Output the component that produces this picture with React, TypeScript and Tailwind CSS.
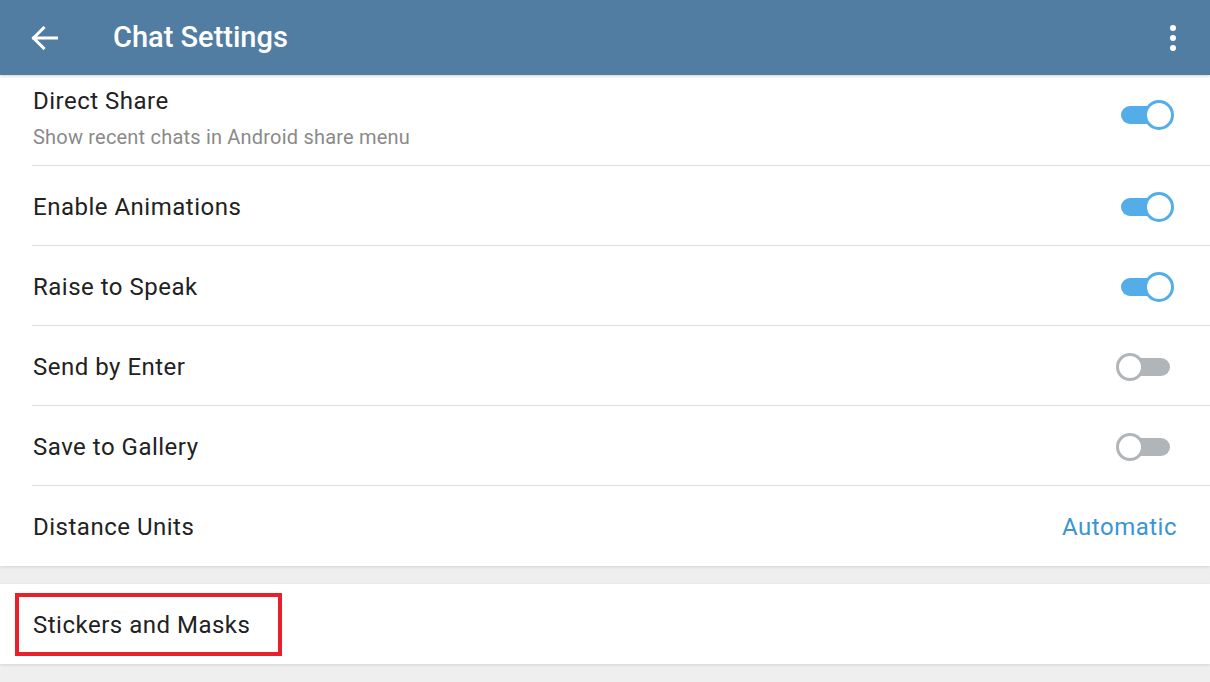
import React from 'react';

// Android-style Telegram "Chat Settings" screen

interface ToggleProps {
  on: boolean;
}

function Toggle({ on }: ToggleProps) {
  if (on) {
    return (
      <div className="relative w-[54px] h-[32px] flex items-center">
        <div className="ml-[1px] w-[48px] h-[18px] rounded-full bg-[#52ade9]" />
        <div className="absolute right-0 top-[1px] w-[30px] h-[30px] rounded-full bg-white border-[3px] border-[#52ade9]" />
      </div>
    );
  }
  return (
    <div className="relative w-[54px] h-[32px] flex items-center mr-[4px]">
      <div className="ml-[4px] w-[50px] h-[18px] rounded-full bg-[#b0b5b9]" />
      <div className="absolute left-0 top-[2px] w-[28px] h-[28px] rounded-full bg-white border-[3px] border-[#b0b5b9]" />
    </div>
  );
}

interface RowProps {
  title: string;
  subtitle?: string;
  toggle?: boolean;
  value?: string;
  divider?: boolean;
}

function Row({ title, subtitle, toggle, value, divider = true }: RowProps) {
  return (
    <div className="relative">
      <div className={`flex items-center justify-between pl-[33px] pr-[36px] ${subtitle ? 'h-[90px]' : divider ? 'h-[79px]' : 'h-[80px]'}`}>
        <div className={subtitle ? 'flex flex-col -mt-[4px]' : 'flex flex-col mt-[2px]'}>
          <span className="text-[24px] leading-[28px] tracking-[0.5px] text-[#222222]">{title}</span>
          {subtitle && (
            <span className="text-[20px] leading-[24px] tracking-[0.2px] text-[#8a8a8a] mt-[10px]">{subtitle}</span>
          )}
        </div>
        {toggle !== undefined && (
          <div className={subtitle ? '-mt-[10px]' : 'mt-[2px]'}>
            <Toggle on={toggle} />
          </div>
        )}
        {value && <span className="text-[24px] tracking-[0.5px] text-[#3a95d5] -mr-[3px] mt-[2px]">{value}</span>}
      </div>
      {divider && <div className="ml-[32px] h-px bg-[#dcdcdc]" />}
    </div>
  );
}

export default function App() {
  return (
    <div
      className="w-[1210px] h-[682px] overflow-hidden bg-[#efefef] flex flex-col"
      style={{ fontFamily: 'Roboto, "Liberation Sans", sans-serif' }}
    >
      {/* Toolbar */}
      <div className="relative z-10 h-[75px] bg-[#527da3] flex items-center shadow-[0_1px_3px_rgba(0,0,0,0.2)]">
        <div className="w-[113px] flex items-center">
          <svg className="ml-[31px]" width="27" height="24" viewBox="0 0 27 24" fill="none">
            <path
              d="M25.5 12H2.5M12.5 2L2.5 12L12.5 22"
              stroke="white"
              strokeWidth="3"
              strokeLinecap="square"
            />
          </svg>
        </div>
        <span className="text-[29px] font-medium text-white">Chat Settings</span>
        <div className="ml-auto mr-[34px] flex flex-col gap-[4px]">
          <div className="w-[6px] h-[6px] rounded-full bg-white" />
          <div className="w-[6px] h-[6px] rounded-full bg-white" />
          <div className="w-[6px] h-[6px] rounded-full bg-white" />
        </div>
      </div>

      {/* Main settings */}
      <div className="bg-white shadow-[0_1px_3px_rgba(0,0,0,0.12)]">
        <Row title="Direct Share" subtitle="Show recent chats in Android share menu" toggle />
        <Row title="Enable Animations" toggle />
        <Row title="Raise to Speak" toggle />
        <Row title="Send by Enter" toggle={false} />
        <Row title="Save to Gallery" toggle={false} />
        <Row title="Distance Units" value="Automatic" divider={false} />
      </div>

      {/* Stickers section */}
      <div className="mt-[18px] bg-white shadow-[0_1px_3px_rgba(0,0,0,0.12)]">
        <div className="h-[80px] flex items-center pl-[15px]">
          <div className="border-[4px] border-[#e8202a] w-[267px] h-[63px] flex items-center pl-[14px]">
            <span className="text-[24px] tracking-[0.5px] text-[#222222] mt-[1px]">Stickers and Masks</span>
          </div>
        </div>
      </div>
    </div>
  );
}
